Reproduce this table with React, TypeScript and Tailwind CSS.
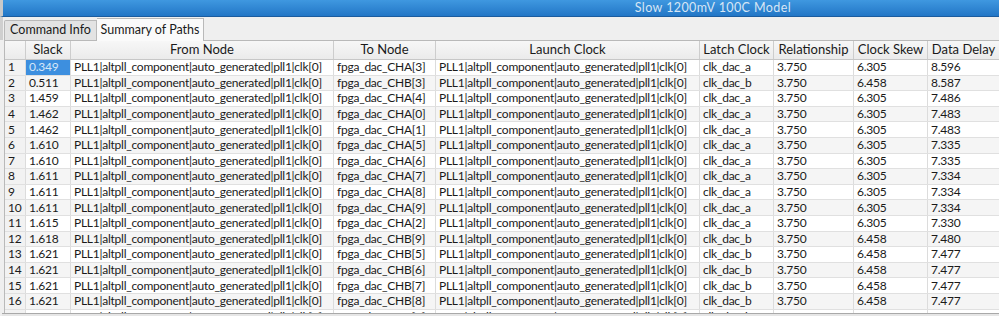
import React from "react";

const cols = [
  { w: 21, label: "" },
  { w: 45, label: "Slack" },
  { w: 263, label: "From Node" },
  { w: 102, label: "To Node" },
  { w: 264, label: "Launch Clock" },
  { w: 74, label: "Latch Clock" },
  { w: 80, label: "Relationship" },
  { w: 74, label: "Clock Skew" },
  { w: 72, label: "Data Delay" },
];

const P = "PLL1|altpll_component|auto_generated|pll1|clk[0]";

const raw: [string, string, string, string, string][] = [
  ["0.349", "fpga_dac_CHA[3]", "clk_dac_a", "6.305", "8.596"],
  ["0.511", "fpga_dac_CHB[3]", "clk_dac_b", "6.458", "8.587"],
  ["1.459", "fpga_dac_CHA[4]", "clk_dac_a", "6.305", "7.486"],
  ["1.462", "fpga_dac_CHA[0]", "clk_dac_a", "6.305", "7.483"],
  ["1.462", "fpga_dac_CHA[1]", "clk_dac_a", "6.305", "7.483"],
  ["1.610", "fpga_dac_CHA[5]", "clk_dac_a", "6.305", "7.335"],
  ["1.610", "fpga_dac_CHA[6]", "clk_dac_a", "6.305", "7.335"],
  ["1.611", "fpga_dac_CHA[7]", "clk_dac_a", "6.305", "7.334"],
  ["1.611", "fpga_dac_CHA[8]", "clk_dac_a", "6.305", "7.334"],
  ["1.611", "fpga_dac_CHA[9]", "clk_dac_a", "6.305", "7.334"],
  ["1.615", "fpga_dac_CHA[2]", "clk_dac_a", "6.305", "7.330"],
  ["1.618", "fpga_dac_CHB[9]", "clk_dac_b", "6.458", "7.480"],
  ["1.621", "fpga_dac_CHB[5]", "clk_dac_b", "6.458", "7.477"],
  ["1.621", "fpga_dac_CHB[6]", "clk_dac_b", "6.458", "7.477"],
  ["1.621", "fpga_dac_CHB[7]", "clk_dac_b", "6.458", "7.477"],
  ["1.621", "fpga_dac_CHB[8]", "clk_dac_b", "6.458", "7.477"],
  ["1.624", "fpga_dac_CHB[4]", "clk_dac_b", "6.458", "7.474"],
];

export default function App() {
  return (
    <div
      className="w-[999px] h-[316px] overflow-hidden bg-[#efefef] flex flex-col text-[12px] text-[#1a1a1a]"
      style={{ fontFamily: 'Lato, "Noto Sans", sans-serif' }}
    >
      {/* title bar */}
      <div className="h-[17px] shrink-0 flex items-center justify-end pr-[208px] bg-gradient-to-b from-[#3f98e0] to-[#2276c6] border-b border-[#1b5c9e] border-l-[3px] border-l-[#c9c9c9]">
        <span className="text-[12.5px] tracking-[0.4px] leading-none text-[#d7e6f5]">Slow 1200mV 100C Model</span>
      </div>
      {/* tabs */}
      <div className="flex items-end h-[23px] shrink-0 pl-[1px] border-l-[3px] border-l-[#cfcfcf] text-[12.5px]">
        <div className="h-[20px] w-[93px] flex items-center justify-center bg-[#e3e3e3] border border-[#b9b9b9] border-b-0 rounded-tl-[2px]">
          Command Info
        </div>
        <div className="h-[23px] w-[107px] flex items-center justify-center bg-[#fafafa] border border-[#b9b9b9] border-b-0 border-l-0 -mb-px relative z-10">
          Summary of Paths
        </div>
      </div>
      {/* table */}
      <div className="h-[273px] shrink-0 overflow-hidden ml-[4px] border-l border-t border-[#b9b9b9] bg-white">
        <div className="flex h-[19px] bg-gradient-to-b from-[#f7f7f7] to-[#ebebeb] border-b border-[#c7c7c7] text-[13px]">
          {cols.map((c, i) => (
            <div
              key={i}
              className="shrink-0 flex items-center justify-center border-r border-[#cdcdcd] whitespace-nowrap"
              style={{ width: c.w }}
            >
              {c.label}
            </div>
          ))}
        </div>
        {raw.map((r, idx) => {
          const vals = [
            String(idx + 1),
            r[0],
            P,
            r[1],
            P,
            r[2],
            "3.750",
            r[3],
            r[4],
          ];
          const even = idx % 2 === 1;
          return (
            <div
              key={idx}
              className={`flex h-[15.6px] border-b border-[#e0e0e0] tracking-[-0.25px] ${even ? "bg-[#f5f5f5]" : "bg-white"}`}
            >
              {vals.map((v, i) => {
                const sel = idx === 0 && i === 1;
                return (
                  <div
                    key={i}
                    className={`shrink-0 flex items-center pl-[3px] border-r border-[#dcdcdc] whitespace-nowrap overflow-hidden leading-none ${
                      i === 0 ? "bg-[#f2f2f2] border-[#d0d0d0]" : ""
                    } ${sel ? "bg-[#3d8fdf] text-[#d5e7f8]" : ""}`}
                    style={{ width: cols[i].w }}
                  >
                    {v}
                  </div>
                );
              })}
            </div>
          );
        })}
      </div>
      <div className="flex-1 ml-[2px] border-t border-[#a9a9a9] bg-[#e6e6e6]" />
    </div>
  );
}
